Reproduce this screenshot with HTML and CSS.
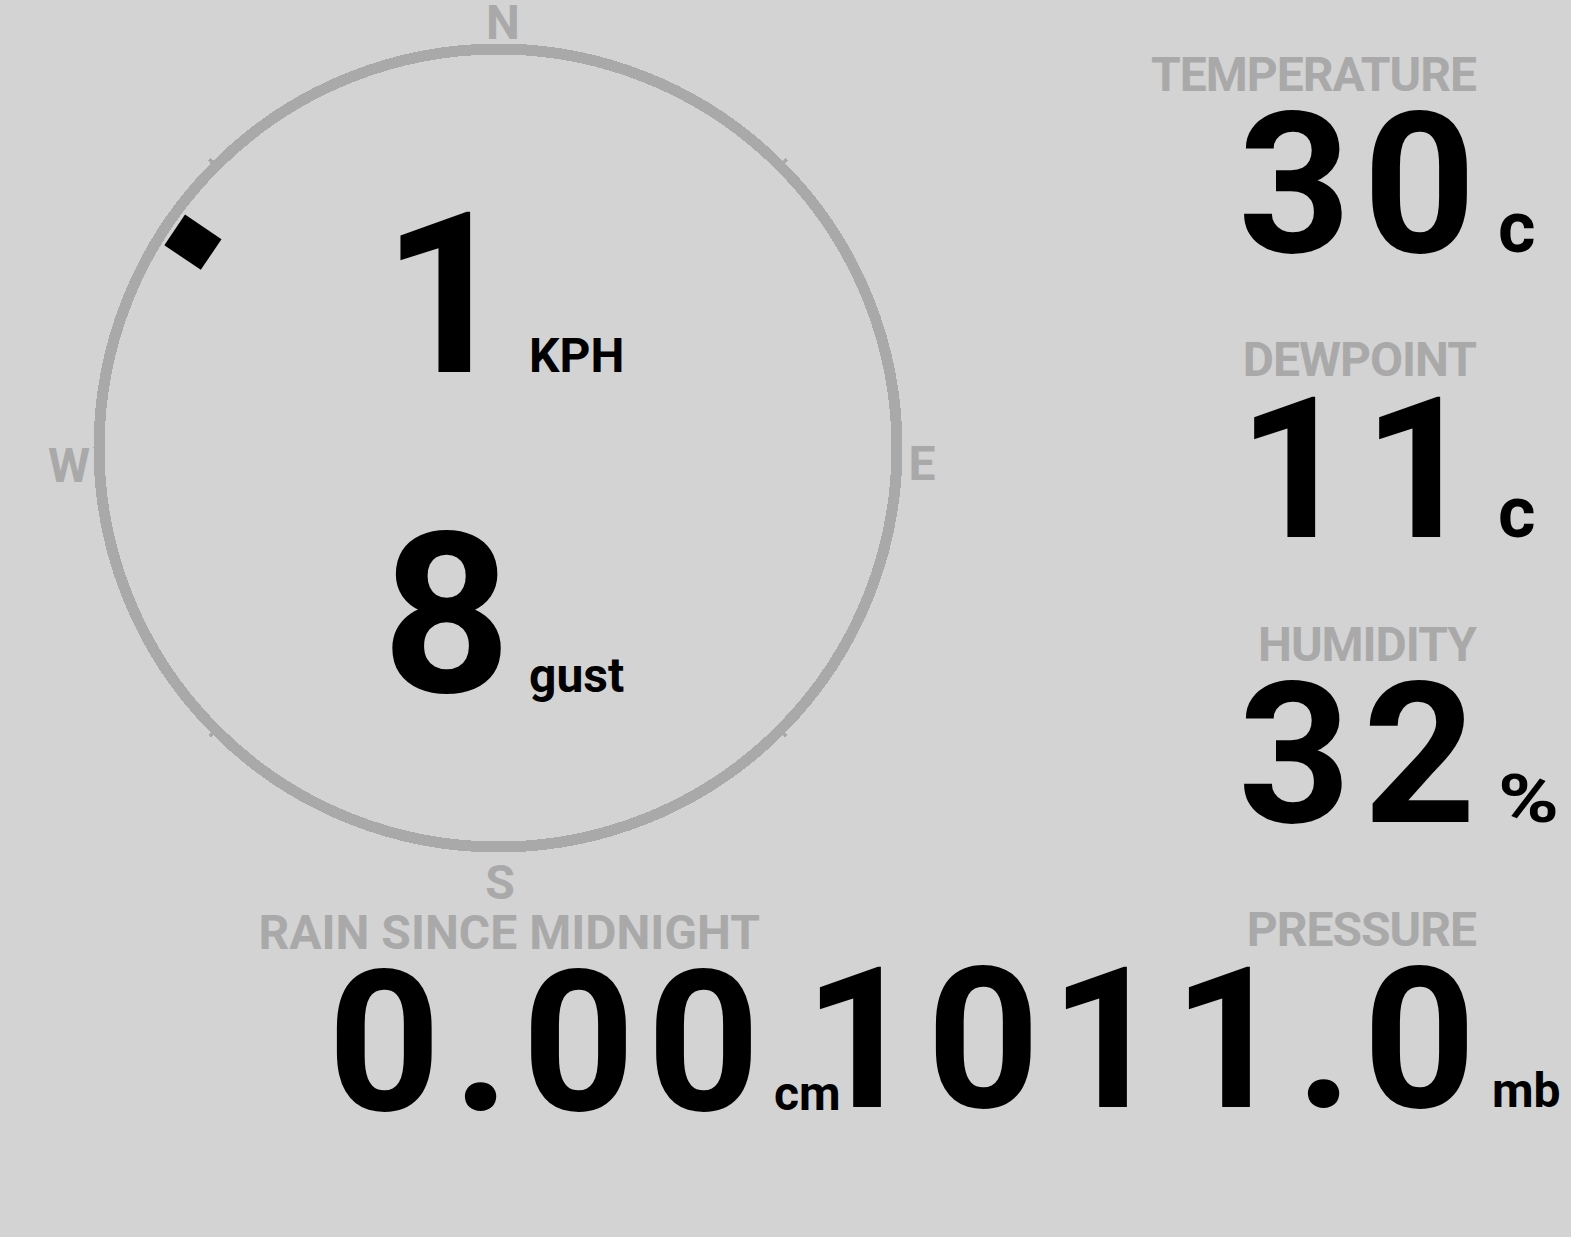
FILE: index.html
```html
<!DOCTYPE html>
<html lang="en">
<head>
  <meta charset="UTF-8">
  <title>Weather Station</title>
  <link rel="stylesheet" href="styles.css">
</head>
<body>
  <div class="dash">
    <div class="left">
      <div class="compass">
        <svg class="ring" width="1000" height="920" viewBox="0 0 1000 920">
          <g transform="translate(498 448)">
            <circle r="399" fill="none" stroke="#a9a9a9" stroke-width="11" shape-rendering="crispEdges"/>
            <g stroke="#a9a9a9" stroke-width="4" shape-rendering="crispEdges">
              <line x1="0" y1="-398" x2="0" y2="-408" transform="rotate(45)"/>
              <line x1="0" y1="-398" x2="0" y2="-408" transform="rotate(135)"/>
              <line x1="0" y1="-398" x2="0" y2="-408" transform="rotate(225)"/>
              <line x1="0" y1="-398" x2="0" y2="-408" transform="rotate(315)"/>
            </g>
            <!-- wind direction marker -->
            <rect x="-18.5" y="-390" width="37" height="44" fill="#000" transform="rotate(304)"/>
          </g>
          <g class="points" text-anchor="middle">
            <text x="503" y="39">N</text>
            <text x="922" y="480">E</text>
            <text x="500" y="899">S</text>
            <text x="69" y="482">W</text>
          </g>
        </svg>
        <div class="reading">
          <span class="num">1</span>
          <span class="unit">KPH</span>
        </div>
        <div class="reading">
          <span class="num">8</span>
          <span class="unit">gust</span>
        </div>
      </div>
      <div class="stat rain">
        <div class="label">RAIN SINCE MIDNIGHT</div>
        <div class="value"><span class="num">0.00</span><span class="unit">cm</span></div>
      </div>
    </div>

    <div class="stats">
      <div class="stat">
        <div class="label">TEMPERATURE</div>
        <div class="value"><span class="num">30</span><span class="unit big">c</span></div>
      </div>
      <div class="stat">
        <div class="label">DEWPOINT</div>
        <div class="value"><span class="num">11</span><span class="unit big">c</span></div>
      </div>
      <div class="stat">
        <div class="label">HUMIDITY</div>
        <div class="value"><span class="num">32</span><span class="unit big"><span class="pct">%</span></span></div>
      </div>
      <div class="stat pressure">
        <div class="label">PRESSURE</div>
        <div class="value"><span class="num">1011.0</span><span class="unit">mb</span></div>
      </div>
    </div>
  </div>
</body>
</html>
```

FILE: styles.css
```css
body {
  margin: 0;
  background: #d3d3d3;
  color: #000;
  font-family: Roboto, "Liberation Sans", sans-serif;
  font-weight: 700;
}
.dash {
  display: flex;
  width: 1571px;
}
.left {
  flex: none;
  width: 1000px;
}
.compass {
  position: relative;
  height: 905px;
  padding-top: 202px;
  box-sizing: border-box;
}
.ring {
  position: absolute;
  left: 0;
  top: 0;
}
.points text {
  fill: #a9a9a9;
  font-family: Roboto, sans-serif;
  font-weight: 700;
  font-size: 48px;
}
.reading {
  position: relative;
  display: flex;
  align-items: baseline;
}
.reading + .reading {
  margin-top: 134px;
}
.reading .num {
  width: 511px;
  text-align: right;
  font-size: 225px;
  line-height: 186px;
}
.reading .unit {
  padding-left: 18px;
  font-size: 48px;
}
.stats {
  flex: none;
  width: 571px;
  display: flex;
  flex-direction: column;
  gap: 68px;
  padding-top: 50px;
}
.stat .label {
  color: #a9a9a9;
  font-size: 48px;
  line-height: 50px;
  text-align: right;
  padding-right: 95px;
}
.stats .label {
  letter-spacing: -1px;
}
.stat .value {
  display: flex;
  justify-content: flex-end;
  align-items: baseline;
  height: 165px;
  margin-top: 2px;
}
.stat .num {
  flex: none;
  font-size: 197px;
  line-height: 165px;
  letter-spacing: 12px;
  margin-right: -12px;
}
.pressure .num {
  letter-spacing: 10px;
  margin-right: -10px;
}
.stat .unit {
  flex: none;
  width: 95px;
  box-sizing: border-box;
  padding-left: 16px;
  font-size: 48px;
}
.stat .unit.big {
  padding-left: 22px;
  font-size: 72px;
}
.pct {
  display: inline-block;
  font-size: 66px;
  transform: scaleX(1.25);
  transform-origin: left;
}
.rain {
  width: 840px;
  margin-top: 3px;
}
.rain .label {
  padding-right: 80px;
}
.rain .unit {
  width: 80px;
  padding-left: 14px;
}
```
